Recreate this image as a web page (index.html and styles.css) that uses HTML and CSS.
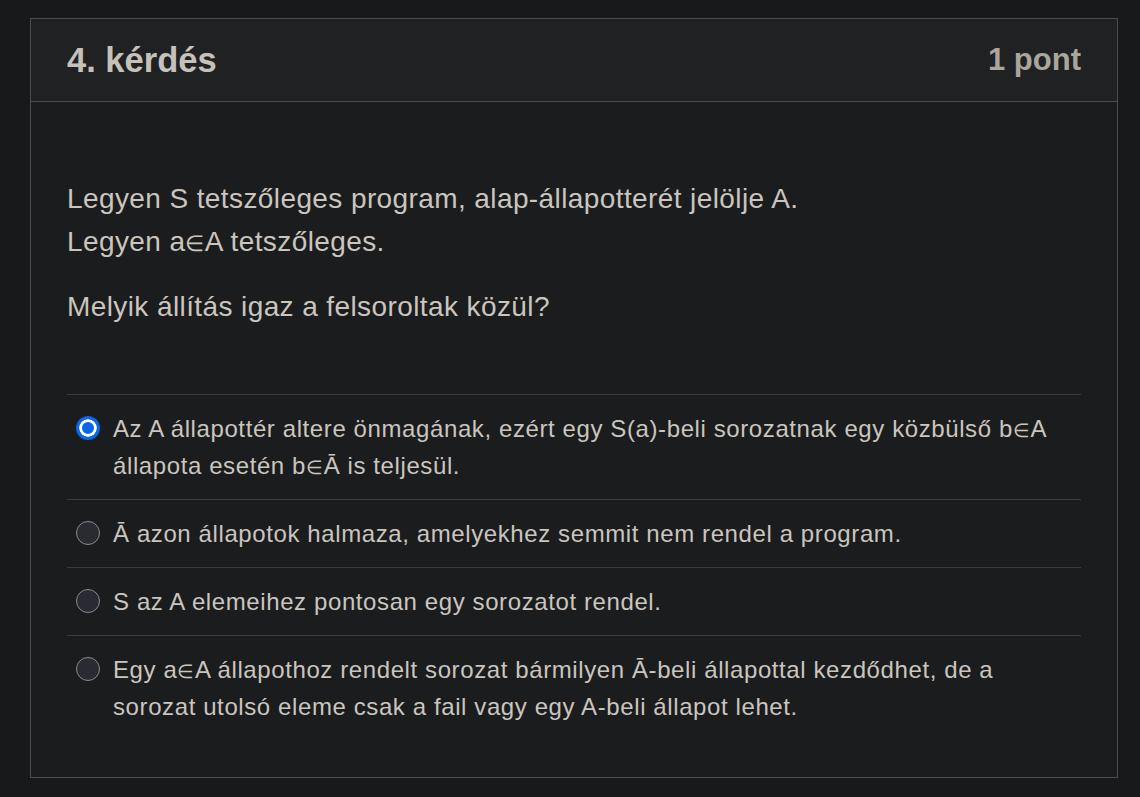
FILE: index.html
```html
<!DOCTYPE html>
<html lang="hu">
<head>
<meta charset="utf-8">
<link rel="stylesheet" href="styles.css">
</head>
<body>
<div class="card">
  <div class="card-header">
    <h2 class="q-title">4. kérdés</h2>
    <span class="q-points">1 pont</span>
  </div>
  <div class="card-body">
    <p class="q-text">Legyen S tetszőleges program, alap-állapotterét jelölje A.<br>Legyen a<span class="sym">∈</span>A tetszőleges.</p>
    <p class="q-text">Melyik állítás igaz a felsoroltak közül?</p>
    <div class="answers">
      <label class="answer">
        <span class="radio checked"></span>
        <span class="answer-text">Az A állapottér altere önmagának, ezért egy S(a)-beli sorozatnak egy közbülső b<span class="sym">∈</span>A állapota esetén b<span class="sym">∈</span>Ā is teljesül.</span>
      </label>
      <label class="answer">
        <span class="radio"></span>
        <span class="answer-text">Ā azon állapotok halmaza, amelyekhez semmit nem rendel a program.</span>
      </label>
      <label class="answer">
        <span class="radio"></span>
        <span class="answer-text">S az A elemeihez pontosan egy sorozatot rendel.</span>
      </label>
      <label class="answer">
        <span class="radio"></span>
        <span class="answer-text">Egy a<span class="sym">∈</span>A állapothoz rendelt sorozat bármilyen Ā-beli állapottal kezdődhet, de a sorozat utolsó eleme csak a fail vagy egy A-beli állapot lehet.</span>
      </label>
    </div>
  </div>
</div>
</body>
</html>
```

FILE: styles.css
```css
html, body {
  margin: 0;
  padding: 0;
  background: #18191b;
}
body {
  font-family: "Liberation Sans", Arial, sans-serif;
  color: #cac5be;
  padding: 18px 22px 0 30px;
}
.card {
  border: 1px solid #4a4c4f;
  background: #1b1c1e;
  height: 760px;
  box-sizing: border-box;
}
.card-header {
  display: flex;
  justify-content: space-between;
  align-items: center;
  height: 83px;
  box-sizing: border-box;
  padding: 0 36px;
  background: #202123;
  border-bottom: 1px solid #4a4c4f;
}
.q-title {
  margin: 0;
  font-size: 34.5px;
  font-weight: bold;
  color: #c6c1b9;
}
.q-points {
  font-size: 31px;
  font-weight: bold;
  color: #aaa59d;
}
.card-body {
  padding: 75px 36px 0 36px;
}
.q-text {
  margin: 0 0 22px 0;
  font-size: 28px;
  line-height: 43px;
  letter-spacing: 0.4px;
}
.sym {
  font-size: 0.78em;
  line-height: 0;
}
.answers {
  margin-top: 66px;
}
.answer {
  display: flex;
  align-items: flex-start;
  gap: 13px;
  padding: 15px 10px 15px 9px;
  border-top: 1px solid #3a3c3f;
  font-size: 24px;
  line-height: 37px;
  letter-spacing: 0.6px;
}
.radio {
  flex: none;
  width: 24px;
  height: 24px;
  box-sizing: border-box;
  margin-top: 6px;
  border-radius: 50%;
  border: 1.5px solid #8a8a8e;
  background: #2a2a32;
}
.radio.checked {
  border: 3px solid #0a66e4;
  background: #0a66e4;
  box-shadow: inset 0 0 0 3px #ffffff;
}
.answer-text {
  flex: 1;
}
```
